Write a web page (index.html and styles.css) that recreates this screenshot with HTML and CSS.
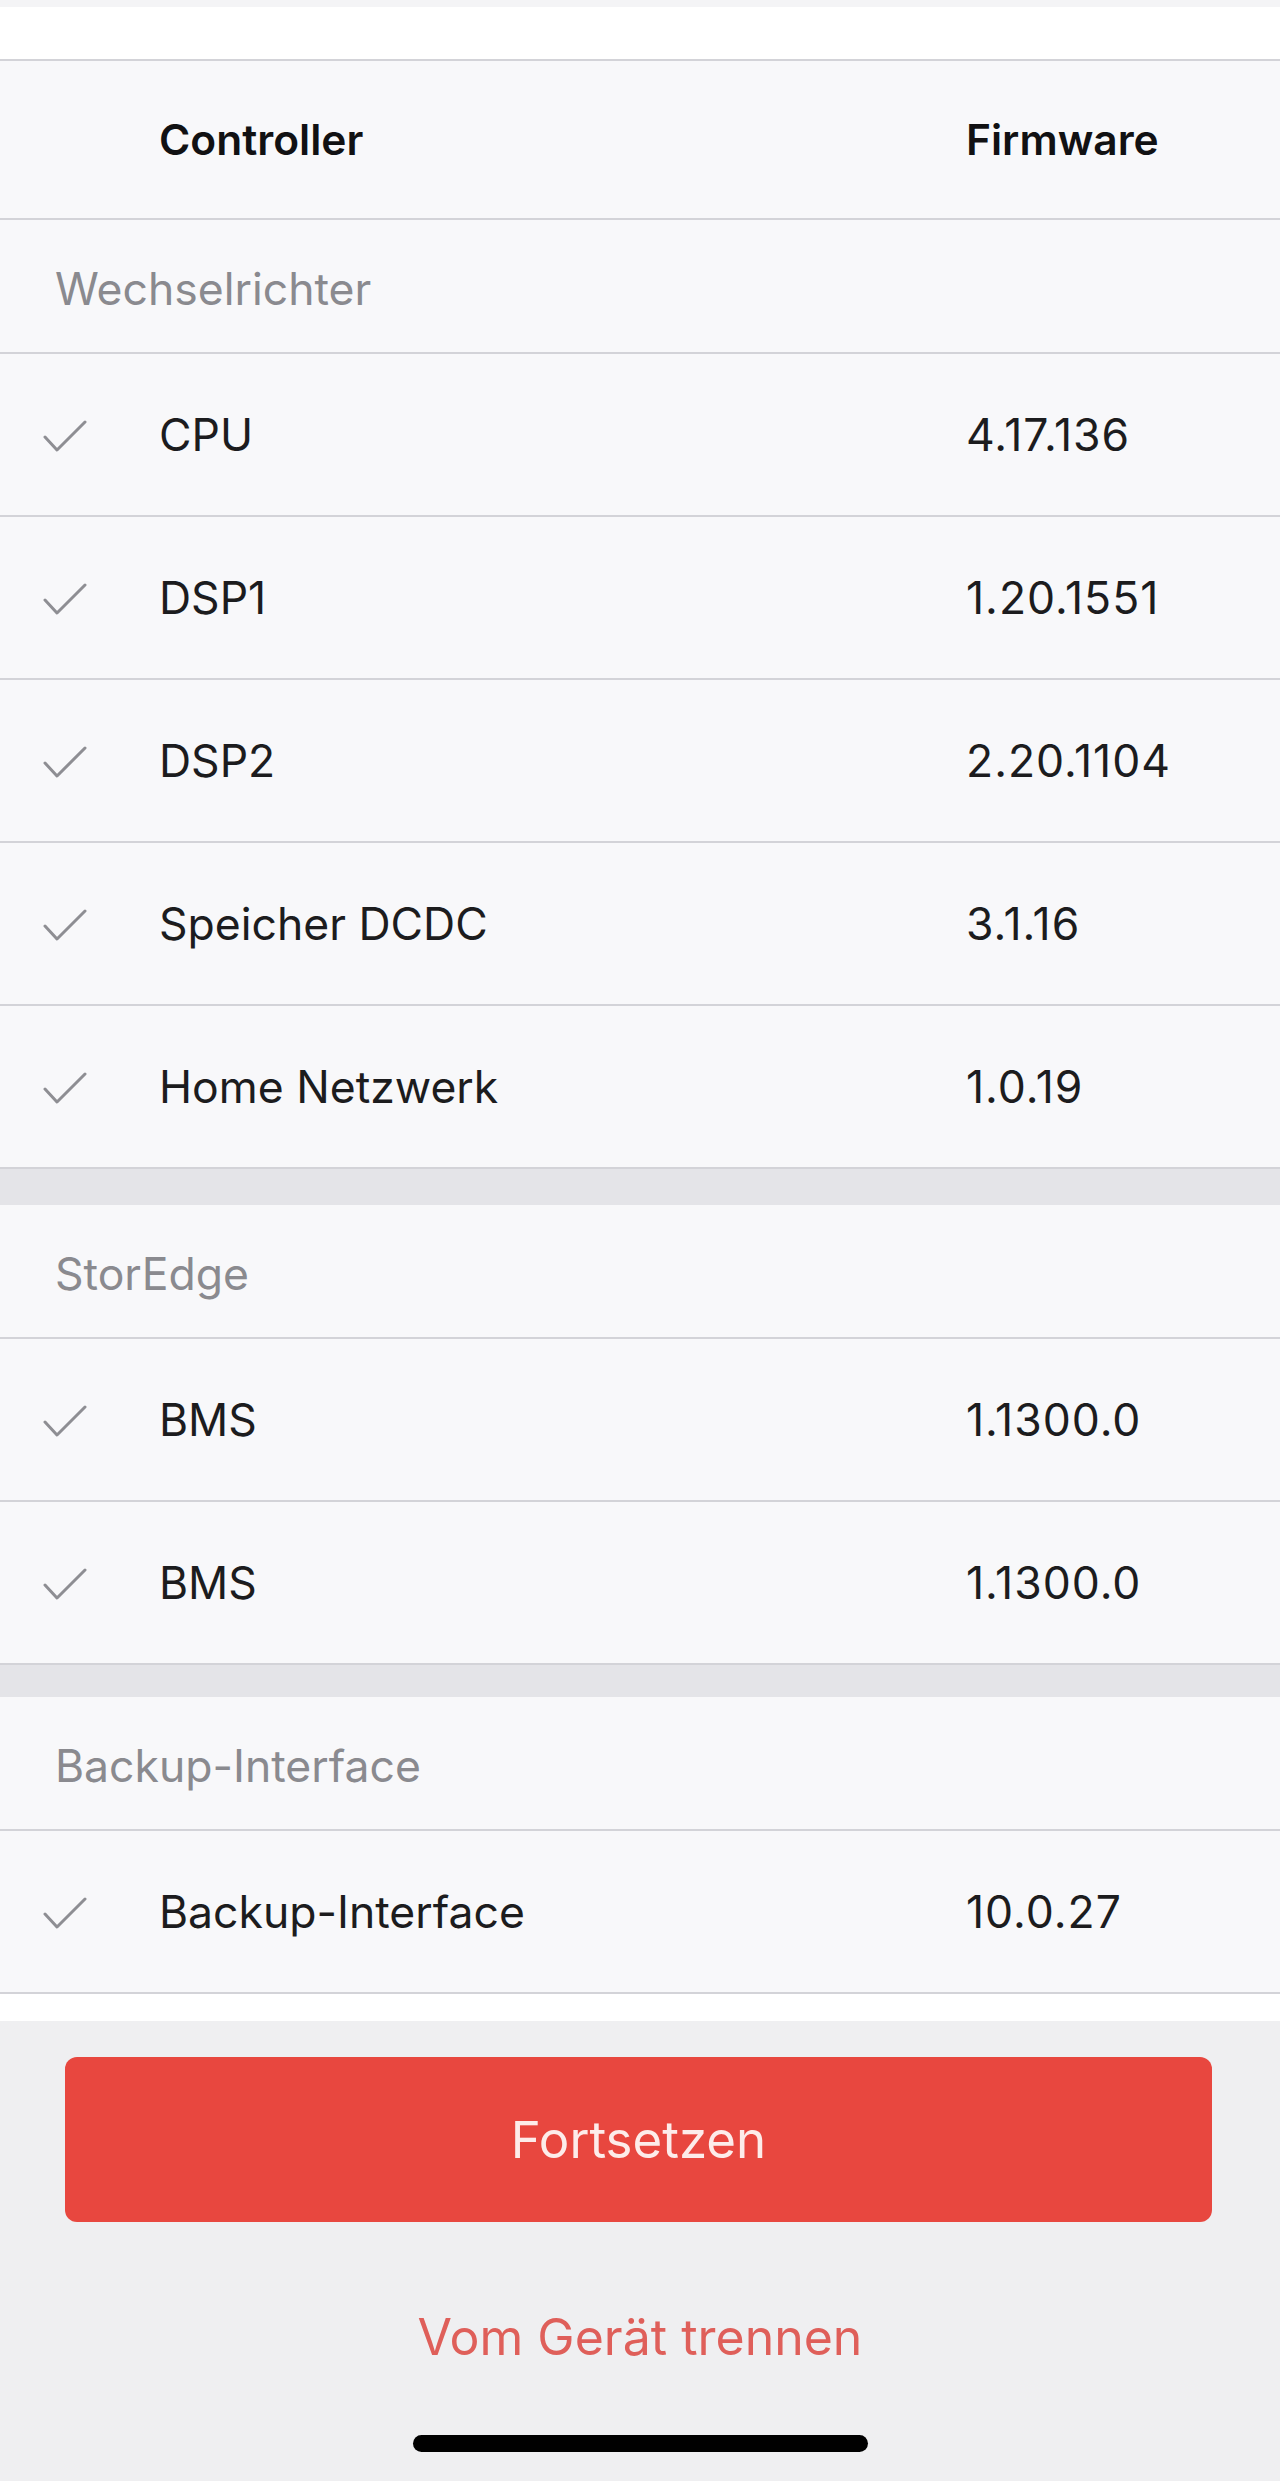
FILE: index.html
```html
<!DOCTYPE html>
<html lang="de">
<head>
<meta charset="utf-8">
<title>Firmware</title>
<link rel="stylesheet" href="styles.css">
</head>
<body>
<div class="screen">
  <div class="top-strip"></div>
  <div class="top-white"></div>

  <div class="table">
    <div class="row head-row">
      <div class="cell-check"></div>
      <div class="cell-name">Controller</div>
      <div class="cell-fw">Firmware</div>
    </div>

    <div class="group">
      <div class="section">Wechselrichter</div>
      <div class="row item"><div class="cell-check"><svg class="check" viewBox="0 0 44 34"><polyline points="2,17 14,30 42,2"/></svg></div><div class="cell-name">CPU</div><div class="cell-fw">4.17.136</div></div>
      <div class="row item"><div class="cell-check"><svg class="check" viewBox="0 0 44 34"><polyline points="2,17 14,30 42,2"/></svg></div><div class="cell-name">DSP1</div><div class="cell-fw">1.20.1551</div></div>
      <div class="row item"><div class="cell-check"><svg class="check" viewBox="0 0 44 34"><polyline points="2,17 14,30 42,2"/></svg></div><div class="cell-name">DSP2</div><div class="cell-fw">2.20.1104</div></div>
      <div class="row item"><div class="cell-check"><svg class="check" viewBox="0 0 44 34"><polyline points="2,17 14,30 42,2"/></svg></div><div class="cell-name">Speicher DCDC</div><div class="cell-fw">3.1.16</div></div>
      <div class="row item"><div class="cell-check"><svg class="check" viewBox="0 0 44 34"><polyline points="2,17 14,30 42,2"/></svg></div><div class="cell-name">Home Netzwerk</div><div class="cell-fw">1.0.19</div></div>
    </div>

    <div class="gap"></div>

    <div class="group">
      <div class="section">StorEdge</div>
      <div class="row item"><div class="cell-check"><svg class="check" viewBox="0 0 44 34"><polyline points="2,17 14,30 42,2"/></svg></div><div class="cell-name">BMS</div><div class="cell-fw">1.1300.0</div></div>
      <div class="row item"><div class="cell-check"><svg class="check" viewBox="0 0 44 34"><polyline points="2,17 14,30 42,2"/></svg></div><div class="cell-name">BMS</div><div class="cell-fw">1.1300.0</div></div>
    </div>

    <div class="gap gap-2"></div>

    <div class="group">
      <div class="section">Backup-Interface</div>
      <div class="row item"><div class="cell-check"><svg class="check" viewBox="0 0 44 34"><polyline points="2,17 14,30 42,2"/></svg></div><div class="cell-name">Backup-Interface</div><div class="cell-fw">10.0.27</div></div>
    </div>
  </div>

  <div class="bottom-white"></div>

  <div class="footer">
    <button class="btn-primary">Fortsetzen</button>
    <button class="btn-link">Vom Gerät trennen</button>
    <div class="home-indicator"></div>
  </div>
</div>
</body>
</html>
```

FILE: styles.css
```css
* { box-sizing: border-box; }
html, body {
  margin: 0;
  padding: 0;
  background: #efeff1;
}
body {
  font-family: "Inter", "Liberation Sans", Arial, sans-serif;
  color: #1c1c1e;
}
.screen {
  width: 1280px;
  height: 2481px;
  display: flex;
  flex-direction: column;
  overflow: hidden;
}
.top-strip {
  height: 7px;
  background: #f4f4f6;
}
.top-white {
  height: 52px;
  background: #ffffff;
}
.table {
  border-top: 2px solid #d3d3d8;
  background: #f8f8fa;
}
.row {
  display: grid;
  grid-template-columns: 159px 1fr 314px;
  align-items: center;
  border-bottom: 2px solid #d3d3d8;
}
.head-row {
  height: 159px;
  font-size: 42.5px;
  font-weight: 600;
  color: #111113;
}
.item {
  height: 163px;
  font-size: 44.5px;
  font-weight: 400;
  color: #1c1c1e;
}
.cell-check {
  display: flex;
  align-items: center;
  padding-left: 43px;
  padding-top: 5px;
}
.check {
  width: 44px;
  height: 34px;
  fill: none;
  stroke: #8e8e93;
  stroke-width: 3;
  stroke-linecap: round;
  stroke-linejoin: round;
}
.item .cell-fw {
  letter-spacing: 1px;
}
.section {
  height: 134px;
  display: flex;
  align-items: center;
  padding-left: 55px;
  padding-top: 6px;
  font-size: 44.5px;
  color: #8a8a8f;
  border-bottom: 2px solid #d3d3d8;
}
.gap {
  height: 36px;
  background: #e4e4e8;
}
.gap-2 {
  height: 32px;
}
.bottom-white {
  height: 27px;
  background: #ffffff;
}
.footer {
  flex: 1;
  background: #efeff1;
  display: flex;
  flex-direction: column;
  align-items: center;
  padding-top: 36px;
}
.btn-primary {
  width: 1147px;
  height: 165px;
  margin-left: -3px;
  border: none;
  border-radius: 12px;
  background: #e8473f;
  color: #fdecea;
  font-family: "Inter", "Liberation Sans", Arial, sans-serif;
  font-size: 51px;
  font-weight: 400;
}
.btn-link {
  margin-top: 80px;
  height: 70px;
  border: none;
  background: transparent;
  color: #df5f5a;
  font-family: "Inter", "Liberation Sans", Arial, sans-serif;
  font-size: 50px;
  font-weight: 400;
  padding: 0;
}
.home-indicator {
  margin-top: 63px;
  width: 455px;
  height: 17px;
  border-radius: 9px;
  background: #000000;
}
```
